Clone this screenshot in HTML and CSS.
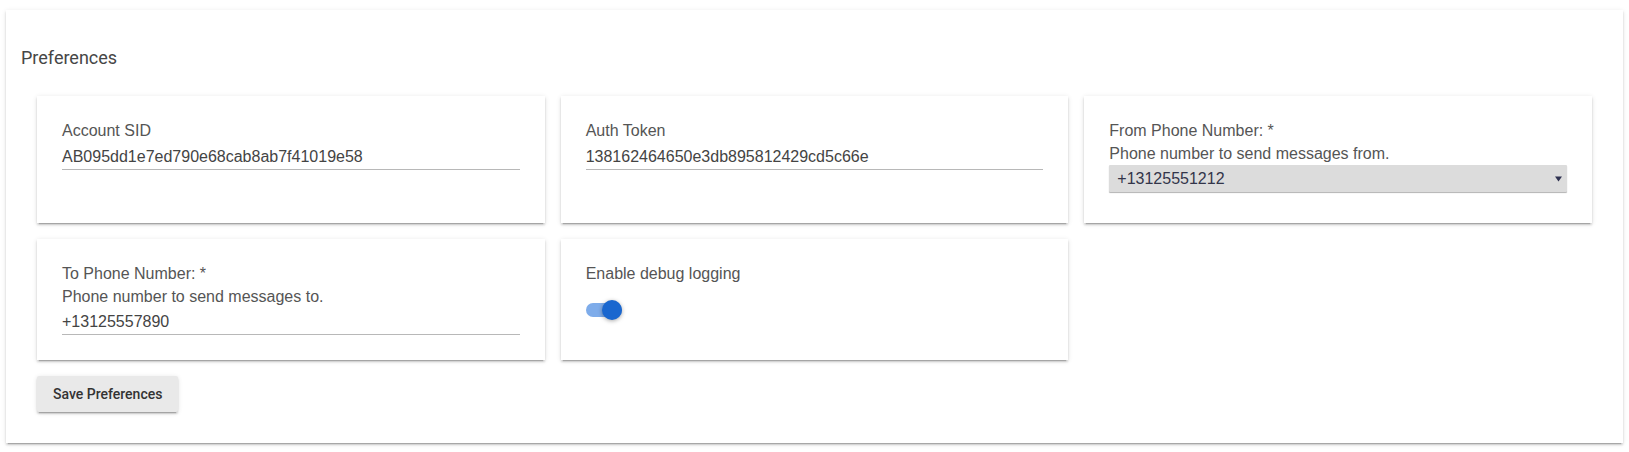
FILE: index.html
```html
<!DOCTYPE html>
<html>
<head>
<meta charset="utf-8">
<link rel="stylesheet" href="styles.css">
</head>
<body>
<div class="page">
  <div class="panel">
    <h2 class="title">Preferences</h2>
    <div class="grid">
      <div class="card">
        <div class="label">Account SID</div>
        <div class="input">AB095dd1e7ed790e68cab8ab7f41019e58</div>
      </div>
      <div class="card">
        <div class="label">Auth Token</div>
        <div class="input">138162464650e3db895812429cd5c66e</div>
      </div>
      <div class="card">
        <div class="label">From Phone Number: *</div>
        <div class="desc">Phone number to send messages from.</div>
        <div class="select">
          <span class="select-value">+13125551212</span>
          <svg class="select-arrow" width="7" height="6" viewBox="0 0 7 6"><path d="M0 0.5 L7 0.5 L3.5 5.5 Z" fill="#2e3150"/></svg>
        </div>
      </div>
      <div class="card">
        <div class="label">To Phone Number: *</div>
        <div class="desc">Phone number to send messages to.</div>
        <div class="input">+13125557890</div>
      </div>
      <div class="card">
        <div class="label">Enable debug logging</div>
        <div class="toggle">
          <div class="toggle-track"></div>
          <div class="toggle-thumb"></div>
        </div>
      </div>
    </div>
    <button class="btn">Save Preferences</button>
  </div>
</div>
</body>
</html>
```
FILE: styles.css
```css
html, body {
  margin: 0;
  padding: 0;
  background: #ffffff;
}

.page {
  padding: 10px 6px 9px 6px;
}

.panel {
  background: #ffffff;
  box-shadow: 0 2px 2px 0 rgba(0,0,0,0.14), 0 1px 5px 0 rgba(0,0,0,0.10), 0 3px 1px -2px rgba(0,0,0,0.2);
  padding: 36px 31px 31px 31px;
}

.title {
  margin: 0 0 26px -16px;
  font-family: Roboto, "Liberation Sans", sans-serif;
  font-weight: 400;
  font-size: 18px;
  line-height: 24px;
  color: #464646;
}

.grid {
  display: grid;
  grid-template-columns: repeat(3, 1fr);
  gap: 16px;
}

.card {
  background: #ffffff;
  box-shadow: 0 2px 2px 0 rgba(0,0,0,0.14), 0 1px 5px 0 rgba(0,0,0,0.12), 0 3px 1px -2px rgba(0,0,0,0.2);
  padding: 23px 25px 25px 25px;
  font-family: "Liberation Sans", Arial, sans-serif;
  font-size: 16px;
}

.label {
  line-height: 24px;
  color: #555555;
}

.desc {
  line-height: 22px;
  color: #555555;
}

.input {
  height: 25px;
  padding-top: 1px;
  line-height: 25px;
  border-bottom: 1px solid #b8b8b8;
  color: #444444;
}

.select {
  display: flex;
  align-items: center;
  justify-content: space-between;
  height: 27px;
  margin-bottom: 6px;
  padding: 0 5px 0 8px;
  background: #dcdcdc;
  box-shadow: 0 1px 1px rgba(0,0,0,0.3);
  border-radius: 1px;
}

.select-value {
  color: #33354a;
  font-size: 16px;
}

.select-arrow {
  display: block;
}

.toggle {
  position: relative;
  width: 36px;
  height: 20px;
  margin-top: 14px;
}

.toggle-track {
  position: absolute;
  left: 0;
  top: 3px;
  width: 36px;
  height: 14px;
  border-radius: 7px;
  background: #7eacea;
}

.toggle-thumb {
  position: absolute;
  left: 16px;
  top: 0;
  width: 20px;
  height: 20px;
  border-radius: 50%;
  background: #1a67cf;
  box-shadow: 0 1px 4px rgba(0,0,0,0.35);
}

.btn {
  display: block;
  margin-top: 16px;
  height: 36px;
  padding: 0 16px;
  border: none;
  border-radius: 2px;
  background: #e9e9e9;
  box-shadow: 0 2px 2px 0 rgba(0,0,0,0.14), 0 1px 5px 0 rgba(0,0,0,0.12), 0 3px 1px -2px rgba(0,0,0,0.2);
  font-family: Roboto, "Liberation Sans", sans-serif;
  font-weight: 500;
  font-size: 14px;
  color: #333333;
}
```
